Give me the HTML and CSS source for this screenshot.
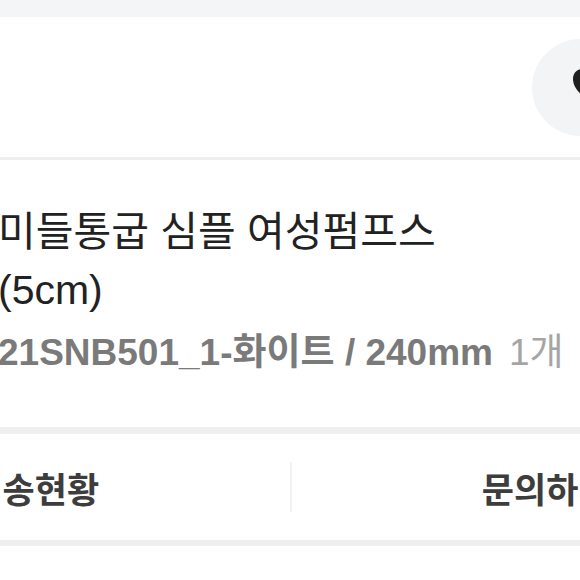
FILE: index.html
```html
<!DOCTYPE html>
<html lang="ko">
<head>
<meta charset="utf-8">
<link rel="stylesheet" href="styles.css">
</head>
<body>
<div class="screen">
  <div class="top-band"></div>
  <header class="header">
    <div class="circle-btn">
      <svg class="circle-icon" width="40" height="40" viewBox="0 0 40 40">
        <path d="M20 36 C14 31 4 24 4 14 C4 8 8 4 13 4 C16 4 18.5 5.5 20 8 C21.5 5.5 24 4 27 4 C32 4 36 8 36 14 C36 24 26 31 20 36 Z" fill="#1f1f1f"/>
      </svg>
    </div>
  </header>
  <div class="sep-thin"></div>
  <section class="product">
    <h1 class="title">미들통굽 심플 여성펌프스<br>(5cm)</h1>
    <p class="option"><span class="opt-main">21SNB501_1-화이트 / 240mm</span><span class="qty">1개</span></p>
  </section>
  <div class="sep-thick"></div>
  <nav class="actions">
    <div class="action">배송현황</div>
    <div class="divider"></div>
    <div class="action">문의하기</div>
  </nav>
  <div class="sep-bottom"></div>
  <div class="rest"></div>
</div>
</body>
</html>
```

FILE: styles.css
```css
html, body {
  margin: 0;
  padding: 0;
  background: #ffffff;
  overflow: hidden;
}
body {
  width: 580px;
  height: 580px;
  font-family: "Liberation Sans", "Noto Sans CJK KR", sans-serif;
}
.screen {
  display: flex;
  flex-direction: column;
}
.top-band {
  height: 17px;
  background: #f4f5f7;
}
.header {
  height: 140px;
  display: flex;
  align-items: center;
  justify-content: flex-end;
  background: #ffffff;
}
.circle-btn {
  position: relative;
  width: 97px;
  height: 97px;
  border-radius: 50%;
  background: #f3f4f6;
  margin-right: -49px;
  flex: none;
}
.circle-icon {
  position: absolute;
  left: 37px;
  top: 26px;
}
.sep-thin {
  height: 3px;
  background: #eeeeef;
}
.product {
  padding: 43px 0 50px 0;
  margin-left: -2px;
}
.title {
  margin: 0;
  font-size: 41px;
  line-height: 58px;
  font-weight: 400;
  color: #222222;
  letter-spacing: 0;
}
.option {
  margin: 10px 0 0 0;
  font-size: 37px;
  line-height: 48px;
  white-space: nowrap;
}
.opt-main {
  color: #7a7a7a;
  font-weight: 700;
}
.qty {
  color: #a5a5a5;
  font-weight: 400;
  margin-left: 16px;
}
.sep-thick {
  height: 7px;
  background: #efefef;
}
.actions {
  height: 106px;
  display: flex;
  align-items: center;
  margin-left: -220px;
  width: 1021px;
}
.action {
  flex: 1;
  text-align: center;
  font-size: 35px;
  font-weight: 700;
  color: #3d3d3d;
  white-space: nowrap;
}
.divider {
  width: 2px;
  height: 50px;
  background: #f2f2f2;
  flex: none;
}
.sep-bottom {
  height: 6px;
  background: #efefef;
}
.rest {
  height: 60px;
  background: #ffffff;
}
```
